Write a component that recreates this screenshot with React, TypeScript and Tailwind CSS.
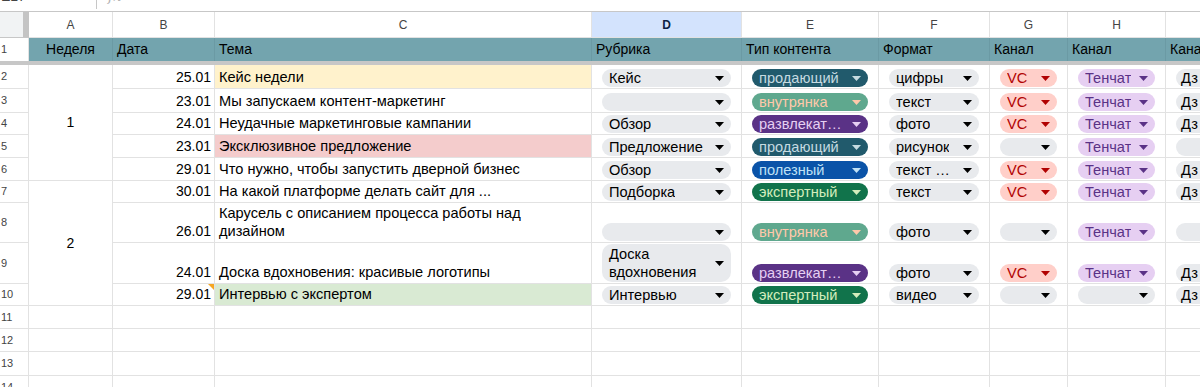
import React from 'react';

type Tone = 'gray' | 'sell' | 'inner' | 'fun' | 'useful' | 'expert' | 'vc' | 'tenchat';

const tones: Record<Tone, string> = {
  gray: 'bg-[#e8eaed] text-black',
  sell: 'bg-[#215a6c] text-[#c6dbe1]',
  inner: 'bg-[#5fa88e] text-[#ffc8aa]',
  fun: 'bg-[#5a3286] text-[#e6cff2]',
  useful: 'bg-[#0a53a8] text-[#bfe1f6]',
  expert: 'bg-[#11734b] text-[#d4edbc]',
  vc: 'bg-[#ffcfc9] text-[#b10202]',
  tenchat: 'bg-[#e6cff2] text-[#5a3286]',
};

const typeTone: Record<string, Tone> = {
  'продающий': 'sell',
  'внутрянка': 'inner',
  'развлекат…': 'fun',
  'полезный': 'useful',
  'экспертный': 'expert',
};

type Row = {
  n: number;
  date: string;
  topic: React.ReactNode;
  topicBg: string;
  rub: string;
  type: string;
  format: string;
  vc: boolean;
  tenchat: boolean;
  dz: boolean;
  week?: { label: string; span: string };
  note?: boolean;
};

const rows: Row[] = [
  { n: 2, date: '25.01', topic: 'Кейс недели', topicBg: 'bg-[#fff2cc]', rub: 'Кейс', type: 'продающий', format: 'цифры', vc: true, tenchat: true, dz: true, week: { label: '1', span: 'row-span-5' } },
  { n: 3, date: '23.01', topic: 'Мы запускаем контент-маркетинг', topicBg: '', rub: '', type: 'внутрянка', format: 'текст', vc: true, tenchat: true, dz: true },
  { n: 4, date: '24.01', topic: 'Неудачные маркетинговые кампании', topicBg: '', rub: 'Обзор', type: 'развлекат…', format: 'фото', vc: true, tenchat: true, dz: true },
  { n: 5, date: '23.01', topic: 'Эксклюзивное предложение', topicBg: 'bg-[#f4cccc]', rub: 'Предложение', type: 'продающий', format: 'рисунок', vc: false, tenchat: true, dz: false },
  { n: 6, date: '29.01', topic: 'Что нужно, чтобы запустить дверной бизнес', topicBg: '', rub: 'Обзор', type: 'полезный', format: 'текст …', vc: true, tenchat: true, dz: true },
  { n: 7, date: '30.01', topic: 'На какой платформе делать сайт для ...', topicBg: '', rub: 'Подборка', type: 'экспертный', format: 'текст', vc: true, tenchat: true, dz: true, week: { label: '2', span: 'row-span-4' } },
  { n: 8, date: '26.01', topic: (<>Карусель с описанием процесса работы над<br />дизайном</>), topicBg: '', rub: '', type: 'внутрянка', format: 'фото', vc: false, tenchat: true, dz: false },
  { n: 9, date: '24.01', topic: 'Доска вдохновения: красивые логотипы', topicBg: '', rub: 'Доска вдохновения', type: 'развлекат…', format: 'фото', vc: true, tenchat: true, dz: true },
  { n: 10, date: '29.01', topic: 'Интервью с экспертом', topicBg: 'bg-[#d9ead3]', rub: 'Интервью', type: 'экспертный', format: 'видео', vc: false, tenchat: false, dz: true, note: true },
];

const line = 'border-r border-b border-[#e2e2e2]';

function Arrow() {
  return (
    <svg width="9" height="5" viewBox="0 0 9 5" className="shrink-0">
      <path d="M0 0h9L4.5 5z" fill="currentColor" />
    </svg>
  );
}

function Chip({ label, tone = 'gray', tall = false }: { label?: string; tone?: Tone; tall?: boolean }) {
  if (tall) {
    return (
      <div className={`flex w-full items-center justify-between gap-1 rounded-[10px] py-[1px] pl-[7px] pr-[7px] leading-[18px] ${tones[tone]}`}>
        <span className="w-[95px]">{label}</span>
        <Arrow />
      </div>
    );
  }
  return (
    <div className={`flex h-[18px] w-full items-center justify-between gap-1 rounded-full pl-[7px] pr-[7px] ${tones[tone]}`}>
      <span className="overflow-hidden whitespace-nowrap leading-[18px]">{label}</span>
      <Arrow />
    </div>
  );
}

function ChipCell({ children, last = false }: { children: React.ReactNode; last?: boolean }) {
  return (
    <div className={`flex items-end pb-[1px] text-[14.6px] ${last ? 'pl-[10px]' : 'px-[10px]'} ${line}`}>
      {children}
    </div>
  );
}

export default function App() {
  const letters = ['A', 'B', 'C', 'D', 'E', 'F', 'G', 'H', ''];

  return (
    <div className="h-[387px] w-[1200px] overflow-hidden bg-white font-['Liberation_Sans',Arial,sans-serif] text-[14px] text-black">
      <div className="grid grid-cols-[29px_84px_102px_377px_150px_137px_111px_78px_98px_100px] grid-rows-[12px_26px_23px_4px_24px_24px_22px_23px_23px_22px_40px_41px_22px_23px_23px_24px_23px]">
        {/* formula bar remnant */}
        <div className="col-span-full flex overflow-hidden border-b border-[#c7c7c7]">
          <div className="-mt-[13px] flex h-[17px] items-end">
            <span className="w-[96px] pl-[1px] text-[14px] leading-[16px] text-[#444]">E17</span>
            <span className="mt-[13px] h-[9px] w-px self-start bg-[#c7c7c7]" />
            <span className="pl-[11px] font-['DejaVu_Serif',serif] text-[14px] italic leading-[16px] text-[#b0b0b0]">fx</span>
          </div>
        </div>

        {/* column letters */}
        <div className="flex border-b border-[#c7c7c7] bg-[#f1f3f4]">
          <div className="flex-1" />
          <div className="w-[6px] bg-[#c4c4c4]" />
        </div>
        {letters.map((l, i) => (
          <div
            key={i}
            className={`flex items-center justify-center border-r border-b border-[#e2e2e2] text-[12px] ${
              l === 'D' ? 'bg-[#d3e3fd] font-bold text-[#0b1f44]' : 'bg-white text-[#444]'
            }`}
          >
            {l}
          </div>
        ))}

        {/* header row */}
        <div className="flex items-center border-r border-[#e2e2e2] pl-[1px] text-[11px] text-[#444]">1</div>
        <div className="flex items-center justify-center border-r border-[#6b9aa4] bg-[#73a4ae]">Неделя</div>
        {['Дата', 'Тема', 'Рубрика', 'Тип контента', 'Формат', 'Канал', 'Канал', 'Канал'].map((h, i) => (
          <div key={i} className="flex items-center overflow-hidden whitespace-nowrap border-r border-[#6b9aa4] bg-[#73a4ae] pl-[4px]">
            {h}
          </div>
        ))}

        {/* freeze line */}
        <div className="col-span-full bg-[#c7c7c7]" />

        {rows.map((r) => (
          <React.Fragment key={r.n}>
            <div className={`flex items-center pl-[1px] text-[11px] text-[#444] ${line}`}>{r.n}</div>
            {r.week && (
              <div className={`flex items-center justify-center ${r.week.span} ${line}`}>{r.week.label}</div>
            )}
            <div className={`relative flex items-end justify-end pb-[2px] pr-[3px] leading-[18px] ${line}`}>
              {r.date}
              {r.note && (
                <span className="absolute right-0 top-0 h-0 w-0 border-l-[6px] border-t-[6px] border-l-transparent border-t-[#f5a623]" />
              )}
            </div>
            <div className={`flex items-end overflow-hidden whitespace-nowrap pb-[2px] pl-[4px] text-[14.6px] leading-[18px] ${r.topicBg} ${line}`}>
              <span>{r.topic}</span>
            </div>
            <ChipCell>
              {r.rub === 'Доска вдохновения' ? <Chip label={r.rub} tall /> : <Chip label={r.rub} />}
            </ChipCell>
            <ChipCell>
              <Chip label={r.type} tone={typeTone[r.type]} />
            </ChipCell>
            <ChipCell>
              <Chip label={r.format} />
            </ChipCell>
            <ChipCell>
              <Chip label={r.vc ? 'VC' : ''} tone={r.vc ? 'vc' : 'gray'} />
            </ChipCell>
            <ChipCell>
              <Chip label={r.tenchat ? 'Тенчат' : ''} tone={r.tenchat ? 'tenchat' : 'gray'} />
            </ChipCell>
            <ChipCell last>
              <div className="flex h-[18px] w-full items-center rounded-l-full bg-[#e8eaed] pl-[5px] leading-[18px]">
                {r.dz ? 'Дз' : ''}
              </div>
            </ChipCell>
          </React.Fragment>
        ))}

        {[11, 12, 13, 14].map((n) => (
          <React.Fragment key={n}>
            <div className={`flex items-center pl-[1px] text-[11px] text-[#444] ${line}`}>{n}</div>
            {Array.from({ length: 9 }).map((_, i) => (
              <div key={i} className={line} />
            ))}
          </React.Fragment>
        ))}
      </div>
    </div>
  );
}
